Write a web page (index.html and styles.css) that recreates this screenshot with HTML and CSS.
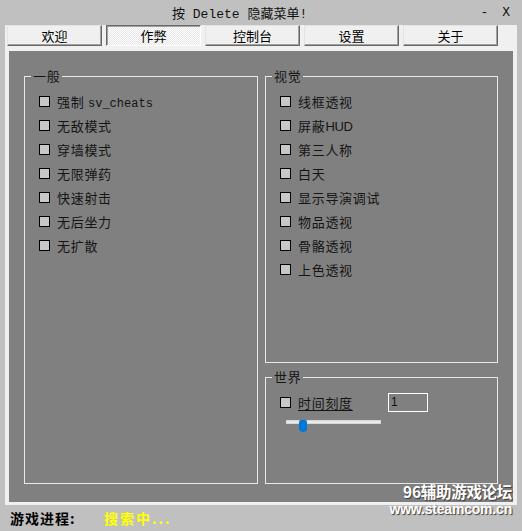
FILE: index.html
```html
<!DOCTYPE html>
<html>
<head>
    <title>按 Delete 隐藏菜单!</title>
    <link rel="stylesheet" href="styles.css">
</head>
<body>
    <div class="titlebar">
        <span class="title">按 Delete 隐藏菜单!</span>
        <div class="controls">
            <span>-</span>
            <span>X</span>
        </div>
    </div>
    <div class="frame">
        <div class="tabs">
            <div class="tab">欢迎</div>
            <div class="tab active">作弊</div>
            <div class="tab">控制台</div>
            <div class="tab">设置</div>
            <div class="tab">关于</div>
        </div>
        <div class="panel">
            <fieldset class="group">
                <legend>一般</legend>
                <label class="row"><input type="checkbox"><span>强制 <span class="mono">sv_cheats</span></span></label>
                <label class="row"><input type="checkbox"><span>无敌模式</span></label>
                <label class="row"><input type="checkbox"><span>穿墙模式</span></label>
                <label class="row"><input type="checkbox"><span>无限弹药</span></label>
                <label class="row"><input type="checkbox"><span>快速射击</span></label>
                <label class="row"><input type="checkbox"><span>无后坐力</span></label>
                <label class="row"><input type="checkbox"><span>无扩散</span></label>
            </fieldset>
            <div class="column">
                <fieldset class="group visual">
                    <legend>视觉</legend>
                    <label class="row"><input type="checkbox"><span>线框透视</span></label>
                    <label class="row"><input type="checkbox"><span>屏蔽<span class="latin">HUD</span></span></label>
                    <label class="row"><input type="checkbox"><span>第三人称</span></label>
                    <label class="row"><input type="checkbox"><span>白天</span></label>
                    <label class="row"><input type="checkbox"><span>显示导演调试</span></label>
                    <label class="row"><input type="checkbox"><span>物品透视</span></label>
                    <label class="row"><input type="checkbox"><span>骨骼透视</span></label>
                    <label class="row"><input type="checkbox"><span>上色透视</span></label>
                </fieldset>
                <fieldset class="group world">
                    <legend>世界</legend>
                    <div class="row">
                        <label class="check"><input type="checkbox"><span class="underline">时间刻度</span></label>
                        <input type="text" class="num" value="1">
                    </div>
                    <div class="slider">
                        <div class="track"></div>
                        <div class="thumb"></div>
                    </div>
                </fieldset>
            </div>
        </div>
    </div>
    <div class="status">
        <span class="status-label">游戏进程:</span>
        <span class="status-value">搜索中...</span>
    </div>
    <div class="watermark">
        <div class="wm-big">96辅助游戏论坛</div>
        <div class="wm-small">www.steamcom.cn</div>
    </div>
</body>
</html>
```
FILE: styles.css
```css
body {
    margin: 0;
    width: 522px;
    height: 531px;
    background-color: #c0c0c0;
    font-family: "Noto Sans CJK SC", "Liberation Sans", sans-serif;
    position: relative;
    overflow: hidden;
}
.titlebar {
    height: 25px;
    display: flex;
    align-items: center;
    font-family: "Liberation Mono", "Noto Sans CJK SC", monospace;
    font-size: 13px;
    color: #111;
}
.title {
    margin-left: 172px;
}
.controls {
    margin-left: auto;
    margin-right: 12px;
    display: flex;
    gap: 14px;
}
.frame {
    margin-left: 5px;
    width: 512px;
    height: 480px;
    box-sizing: border-box;
    background-color: #f0f0f0;
    padding-bottom: 3px;
    display: flex;
    flex-direction: column;
}
.tabs {
    display: flex;
    gap: 4px;
    height: 26px;
    padding-left: 2px;
}
.tab {
    width: 95px;
    height: 21px;
    box-sizing: border-box;
    background-color: #f0f0f0;
    border-top: 1px solid #e3e3e3;
    border-left: 1px solid #e3e3e3;
    border-right: 1px solid #696969;
    border-bottom: 1px solid #696969;
    box-shadow: inset -1px -1px 0 #a0a0a0;
    font-size: 13px;
    line-height: 19px;
    text-align: center;
    color: #000;
}
.tab.active {
    border-top-color: #696969;
    border-left-color: #696969;
    border-right-color: #ffffff;
    border-bottom-color: #ffffff;
    box-shadow: inset 1px 1px 0 #a0a0a0;
    background: repeating-conic-gradient(#ffffff 0 25%, #e6e6e6 0 50%) 0 0 / 2px 2px;
}
.panel {
    flex: 1;
    margin: 0 4px;
    background-color: #808080;
    display: grid;
    grid-template-columns: 234px 233px;
    column-gap: 7px;
    padding: 18px 15px 18px 15px;
}
.column {
    display: flex;
    flex-direction: column;
    gap: 7px;
}
.group {
    margin: 0;
    min-width: 0;
    border: 1px solid #e8e8e8;
    padding: 6px 0 0 14px;
    color: #151515;
    font-size: 13px;
    letter-spacing: 0.7px;
}
.group legend {
    margin-left: -8px;
    padding: 0 2px;
    height: 14px;
    line-height: 14px;
    font-size: 13px;
}
.visual {
    flex: 0 0 auto;
    height: 294px;
    box-sizing: border-box;
}
.world {
    flex: 1;
}
.row {
    display: flex;
    align-items: center;
    height: 24px;
}
.row input[type="checkbox"],
.check input[type="checkbox"] {
    appearance: none;
    width: 11px;
    height: 11px;
    margin: 0 7px 0 0;
    box-sizing: border-box;
    border: 1px solid #000;
    background-color: #c8c8c8;
}
.mono {
    font-family: "Liberation Mono", monospace;
    font-size: 12px;
    letter-spacing: 0;
}
.latin {
    font-family: "Liberation Sans", sans-serif;
    letter-spacing: -0.3px;
}
.check {
    display: flex;
    align-items: center;
    width: 108px;
}
.underline {
    text-decoration: underline;
    text-underline-offset: 2px;
}
.num {
    width: 40px;
    height: 19px;
    box-sizing: border-box;
    border: 1px solid #ffffff;
    background-color: #808080;
    padding: 0 0 0 2px;
    font-family: "Liberation Sans", sans-serif;
    font-size: 12px;
    color: #111;
    outline: none;
}
.slider {
    position: relative;
    width: 95px;
    height: 12px;
    margin: 6px 0 0 6px;
}
.track {
    margin-top: 4px;
    height: 4px;
    box-sizing: border-box;
    background-color: #e7eae8;
    border: 1px solid #d6d6d6;
}
.thumb {
    position: absolute;
    left: 13px;
    top: 0;
    width: 8px;
    height: 12px;
    background-color: #0078d7;
    border-radius: 2px 2px 4px 4px;
}
.status {
    height: 26px;
    display: flex;
    align-items: center;
    padding-left: 10px;
    font-size: 14px;
    font-weight: bold;
}
.status-label {
    width: 94px;
    color: #000;
    letter-spacing: 1px;
}
.status-value {
    color: #ffff00;
    letter-spacing: 2px;
}
.watermark {
    position: absolute;
    right: 10px;
    top: 482px;
    text-align: right;
    color: #ffffff;
    font-weight: bold;
    text-shadow: 1px 1px 1px #3a3a3a;
}
.wm-big {
    font-size: 15.5px;
    line-height: 19px;
    letter-spacing: -0.3px;
}
.wm-small {
    font-family: "Liberation Sans", sans-serif;
    font-size: 14px;
    line-height: 16px;
    letter-spacing: -0.2px;
}
```
